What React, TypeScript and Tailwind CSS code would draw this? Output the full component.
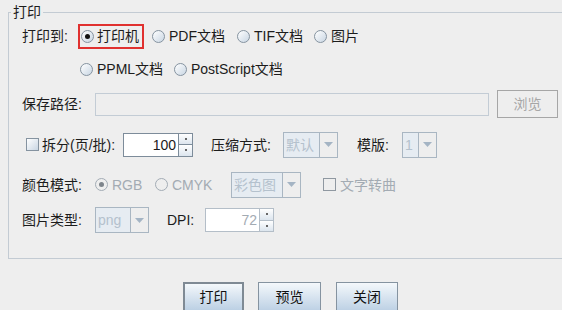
import React from "react";

// 单选框（Metal 风格）
function Radio({ checked = false, disabled = false }: { checked?: boolean; disabled?: boolean }) {
    return (
        <span
            className={
                "flex h-[13px] w-[13px] shrink-0 items-center justify-center rounded-full border " +
                (disabled ? "border-[#a3acb5] bg-[#eeeeee]" : "border-[#8593a0] bg-linear-to-br from-white to-[#c9d6e3]")
            }
        >
            {checked && <span className={"h-[5px] w-[5px] rounded-full " + (disabled ? "bg-[#7d848b]" : "bg-[#111]")} />}
        </span>
    );
}

function Check({ disabled = false }: { disabled?: boolean }) {
    return (
        <span
            className={
                "block h-[13px] w-[13px] shrink-0 border " +
                (disabled ? "border-[#8f98a1] bg-[#eeeeee]" : "border-[#8593a0] bg-linear-to-br from-white to-[#c9d6e3]")
            }
        />
    );
}

function RadioItem({ label, checked, disabled, width }: { label: string; checked?: boolean; disabled?: boolean; width: string }) {
    return (
        <div className={"flex items-center gap-[4px] " + width}>
            <Radio checked={checked} disabled={disabled} />
            <span className={disabled ? "text-[#a3abb3]" : ""}>{label}</span>
        </div>
    );
}

// 下拉框（禁用状态）
function Combo({ value, width }: { value: string; width: string }) {
    return (
        <div className={"flex h-[26px] border border-[#a9b6c2] " + width}>
            <div className="flex flex-1 items-center bg-[#e6ecf2] pl-[2px] text-[#b4c1cd]">{value}</div>
            <div className="flex w-[18px] items-center justify-center border-l border-[#a9b6c2] bg-[#eeeeee]">
                <svg width="9" height="5" viewBox="0 0 9 5">
                    <path d="M0 0 H9 L4.5 5 Z" fill="#a4b4c4" />
                </svg>
            </div>
        </div>
    );
}

// 数字微调框
function Spinner({ value, width, disabled = false }: { value: string; width: string; disabled?: boolean }) {
    return (
        <div className={"flex h-[24px] border " + (disabled ? "border-[#b4bec8]" : "border-[#7d8c9a]") + " " + width}>
            <div className={"flex flex-1 items-center justify-end bg-white pr-[2px] " + (disabled ? "text-[#a3abb3]" : "")}>{value}</div>
            <div className={"flex w-[14px] flex-col border-l " + (disabled ? "border-[#b4bec8]" : "border-[#7d8c9a]")}>
                <div className="flex flex-1 items-center justify-center bg-linear-to-b from-white to-[#dce5ee]">
                    <span className="h-[2px] w-[2px] bg-[#666]" />
                </div>
                <div className={"flex flex-1 items-center justify-center border-t bg-linear-to-b from-white to-[#dce5ee] " + (disabled ? "border-[#b4bec8]" : "border-[#7d8c9a]")}>
                    <span className="h-[2px] w-[2px] bg-[#666]" />
                </div>
            </div>
        </div>
    );
}

function Button({ label, width, focused = false }: { label: string; width: string; focused?: boolean }) {
    return (
        <button
            type="button"
            className={
                "flex h-[30px] items-center justify-center bg-linear-to-b from-[#f4f8fb] to-[#bcd0e4] text-[#111] " +
                (focused ? "border-2 border-[#7f8a94]" : "border border-[#8593a0]") +
                " " + width
            }
        >
            {label}
        </button>
    );
}

export default function App() {
    return (
        <div
            className="h-[310px] w-[562px] overflow-hidden bg-[#eeeeee] text-[14px] leading-[18px] text-[#1c1c1c]"
            style={{ fontFamily: '"Liberation Sans", "Noto Sans CJK SC", sans-serif' }}
        >
            {/* 分组框：打印 */}
            <div className="relative ml-[8px] mt-[12px] h-[247px] w-[554px] border border-r-0 border-[#c3cbd3] pl-[13px] pt-[11px]">
                <span className="absolute -top-[10px] left-[2px] bg-[#eeeeee] px-[2px]">打印</span>

                {/* 打印到 */}
                <div className="flex h-[24px] items-center">
                    <span className="w-[56px]">打印到:</span>
                    <div className="flex h-[25px] w-[66px] items-center gap-[3px] border-2 border-[#e0312f] pl-[1px]">
                        <Radio checked />
                        <span>打印机</span>
                    </div>
                    <div className="ml-[8px] flex items-center">
                        <RadioItem label="PDF文档" width="w-[85px]" />
                        <RadioItem label="TIF文档" width="w-[77px]" />
                        <RadioItem label="图片" width="w-[60px]" />
                    </div>
                </div>

                <div className="mt-[9px] flex h-[24px] items-center pl-[58px]">
                    <RadioItem label="PPML文档" width="w-[94px]" />
                    <RadioItem label="PostScript文档" width="w-[120px]" />
                </div>

                {/* 保存路径 */}
                <div className="mt-[9px] flex h-[28px] items-center">
                    <span className="w-[73px]">保存路径:</span>
                    <div className="h-[23px] w-[394px] border border-[#c3ccd5]" />
                    <div className="ml-[8px] flex h-[28px] w-[61px] items-center justify-center border border-[#a6a6a6] text-[#a6a6a6]">
                        浏览
                    </div>
                </div>

                {/* 拆分 / 压缩方式 / 模版 */}
                <div className="mt-[13px] flex h-[27px] items-center">
                    <span className="ml-[4px]"><Check /></span>
                    <span className="ml-[3px] w-[81px]">拆分(页/批):</span>
                    <Spinner value="100" width="w-[70px]" />
                    <span className="ml-[18px] w-[72px]">压缩方式:</span>
                    <Combo value="默认" width="w-[55px]" />
                    <span className="ml-[19px] w-[45px]">模版:</span>
                    <Combo value="1" width="w-[35px]" />
                </div>

                {/* 颜色模式 */}
                <div className="mt-[13px] flex h-[27px] items-center">
                    <span className="w-[73px]">颜色模式:</span>
                    <RadioItem label="RGB" checked disabled width="w-[60px]" />
                    <RadioItem label="CMYK" disabled width="w-[76px]" />
                    <Combo value="彩色图" width="w-[70px]" />
                    <span className="ml-[22px]"><Check disabled /></span>
                    <span className="ml-[4px] text-[#a3abb3]">文字转曲</span>
                </div>

                {/* 图片类型 / DPI */}
                <div className="mt-[9px] flex h-[26px] items-center">
                    <span className="w-[73px]">图片类型:</span>
                    <Combo value="png" width="w-[54px]" />
                    <span className="ml-[18px] w-[38px]">DPI:</span>
                    <Spinner value="72" disabled width="w-[69px]" />
                </div>
            </div>

            {/* 底部按钮 */}
            <div className="mt-[23px] flex pl-[183px]">
                <Button label="打印" width="w-[61px]" focused />
                <div className="ml-[14px]"><Button label="预览" width="w-[63px]" /></div>
                <div className="ml-[15px]"><Button label="关闭" width="w-[62px]" /></div>
            </div>
        </div>
    );
}
